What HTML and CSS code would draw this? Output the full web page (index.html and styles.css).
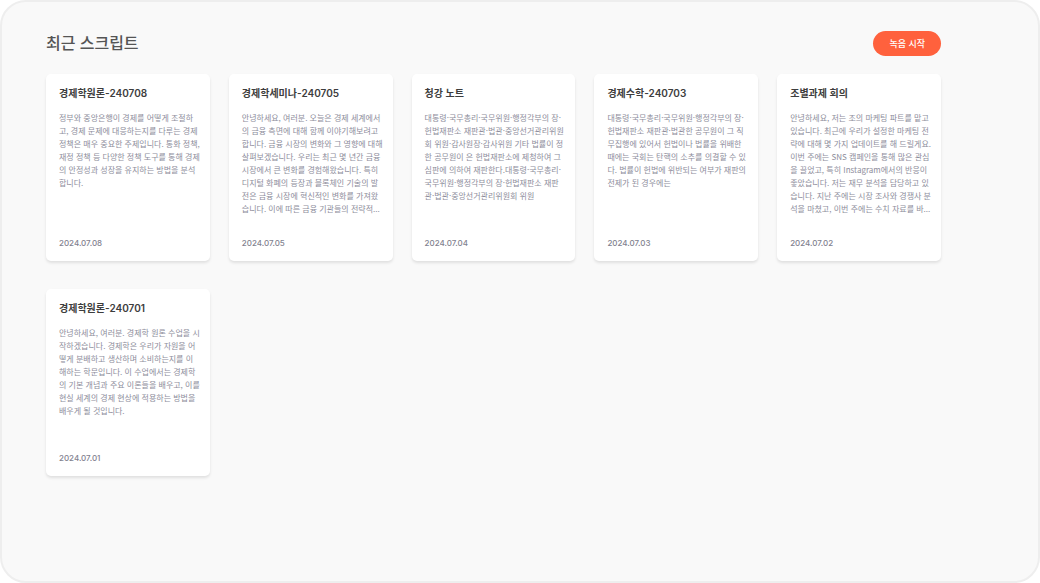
FILE: index.html
```html
<!DOCTYPE html>
<html lang="ko">
<head>
<meta charset="utf-8">
<meta name="viewport" content="width=device-width, initial-scale=1">
<title>최근 스크립트</title>
<link rel="stylesheet" href="styles.css">
</head>
<body>
<main class="panel">
  <header class="panel-header">
    <h1 class="panel-title">최근 스크립트</h1>
    <button class="record-button" type="button">녹음 시작</button>
  </header>
  <section class="card-grid">
    <article class="card">
      <h2 class="card-title">경제학원론-240708</h2>
      <p class="card-text">정부와 중앙은행이 경제를 어떻게 조절하<br>고, 경제 문제에 대응하는지를 다루는 경제<br>정책은 매우 중요한 주제입니다. 통화 정책,<br>재정 정책 등 다양한 정책 도구를 통해 경제<br>의 안정성과 성장을 유지하는 방법을 분석<br>합니다.</p>
      <time class="card-date" datetime="2024-07-08">2024.07.08</time>
    </article>
    <article class="card">
      <h2 class="card-title">경제학세미나-240705</h2>
      <p class="card-text">안녕하세요, 여러분. 오늘은 경제 세계에서<br>의 금융 측면에 대해 함께 이야기해보려고<br>합니다. 금융 시장의 변화와 그 영향에 대해<br>살펴보겠습니다. 우리는 최근 몇 년간 금융<br>시장에서 큰 변화를 경험해왔습니다. 특히<br>디지털 화폐의 등장과 블록체인 기술의 발<br>전은 금융 시장에 혁신적인 변화를 가져왔<br>습니다. 이에 따른 금융 기관들의 전략적...</p>
      <time class="card-date" datetime="2024-07-05">2024.07.05</time>
    </article>
    <article class="card">
      <h2 class="card-title">청강 노트</h2>
      <p class="card-text">대통령·국무총리·국무위원·행정각부의 장·<br>헌법재판소 재판관·법관·중앙선거관리위원<br>회 위원·감사원장·감사위원 기타 법률이 정<br>한 공무원이 은 헌법재판소에 제청하여 그<br>심판에 의하여 재판한다.대통령·국무총리·<br>국무위원·행정각부의 장·헌법재판소 재판<br>관·법관·중앙선거관리위원회 위원</p>
      <time class="card-date" datetime="2024-07-04">2024.07.04</time>
    </article>
    <article class="card">
      <h2 class="card-title">경제수학-240703</h2>
      <p class="card-text">대통령·국무총리·국무위원·행정각부의 장·<br>헌법재판소 재판관·법관한 공무원이 그 직<br>무집행에 있어서 헌법이나 법률을 위배한<br>때에는 국회는 탄핵의 소추를 의결할 수 있<br>다. 법률이 헌법에 위반되는 여부가 재판의<br>전제가 된 경우에는</p>
      <time class="card-date" datetime="2024-07-03">2024.07.03</time>
    </article>
    <article class="card">
      <h2 class="card-title">조별과제 회의</h2>
      <p class="card-text">안녕하세요, 저는 조의 마케팅 파트를 맡고<br>있습니다. 최근에 우리가 설정한 마케팅 전<br>략에 대해 몇 가지 업데이트를 해 드릴게요.<br>이번 주에는 SNS 캠페인을 통해 많은 관심<br>을 끌었고, 특히 Instagram에서의 반응이<br>좋았습니다. 저는 재무 분석을 담당하고 있<br>습니다. 지난 주에는 시장 조사와 경쟁사 분<br>석을 마쳤고, 이번 주에는 수치 자료를 바...</p>
      <time class="card-date" datetime="2024-07-02">2024.07.02</time>
    </article>
    <article class="card">
      <h2 class="card-title">경제학원론-240701</h2>
      <p class="card-text">안녕하세요, 여러분. 경제학 원론 수업을 시<br>작하겠습니다. 경제학은 우리가 자원을 어<br>떻게 분배하고 생산하며 소비하는지를 이<br>해하는 학문입니다. 이 수업에서는 경제학<br>의 기본 개념과 주요 이론들을 배우고, 이를<br>현실 세계의 경제 현상에 적용하는 방법을<br>배우게 될 것입니다.</p>
      <time class="card-date" datetime="2024-07-01">2024.07.01</time>
    </article>
  </section>
</main>
</body>
</html>
```

FILE: styles.css
```css
* {
  box-sizing: border-box;
}

body {
  margin: 0;
  background: #ffffff;
  font-family: Inter, "Noto Sans CJK KR", sans-serif;
}

.panel {
  min-height: 100vh;
  padding: 29px 97px 28px 44px;
  border: 2px solid #eeeeee;
  border-radius: 26px;
  background: #f9f9f9;
}

.panel-header {
  display: flex;
  align-items: center;
  justify-content: space-between;
  margin-bottom: 18px;
}

.panel-title {
  margin: 0;
  color: #555555;
  font-size: 16px;
  font-weight: 500;
  line-height: 25px;
}

.record-button {
  padding: 4px 16px;
  border: 0;
  border-radius: 13px;
  background: #ff613d;
  color: #ffffff;
  font-family: inherit;
  font-size: 9px;
  font-weight: 500;
  line-height: 17px;
  cursor: pointer;
}

.card-grid {
  display: grid;
  grid-template-columns: repeat(5, minmax(0, 1fr));
  gap: 28px 19px;
}

.card {
  display: flex;
  flex-direction: column;
  min-height: 187px;
  padding: 12px 0 11px 13px;
  border-radius: 5px;
  background: #ffffff;
  box-shadow: 0 2px 3px rgba(0, 0, 0, 0.1);
}

.card-title {
  margin: 0 0 10px;
  color: #3d3d3d;
  font-size: 10px;
  font-weight: 600;
  line-height: 15px;
}

.card-text {
  margin: 0;
  color: #8d8d9b;
  font-family: "Noto Sans CJK KR", sans-serif;
  font-size: 8px;
  line-height: 13px;
  white-space: nowrap;
}

.card-date {
  margin-top: auto;
  color: #82828f;
  font-size: 8px;
  font-weight: 500;
  line-height: 14px;
}
```
